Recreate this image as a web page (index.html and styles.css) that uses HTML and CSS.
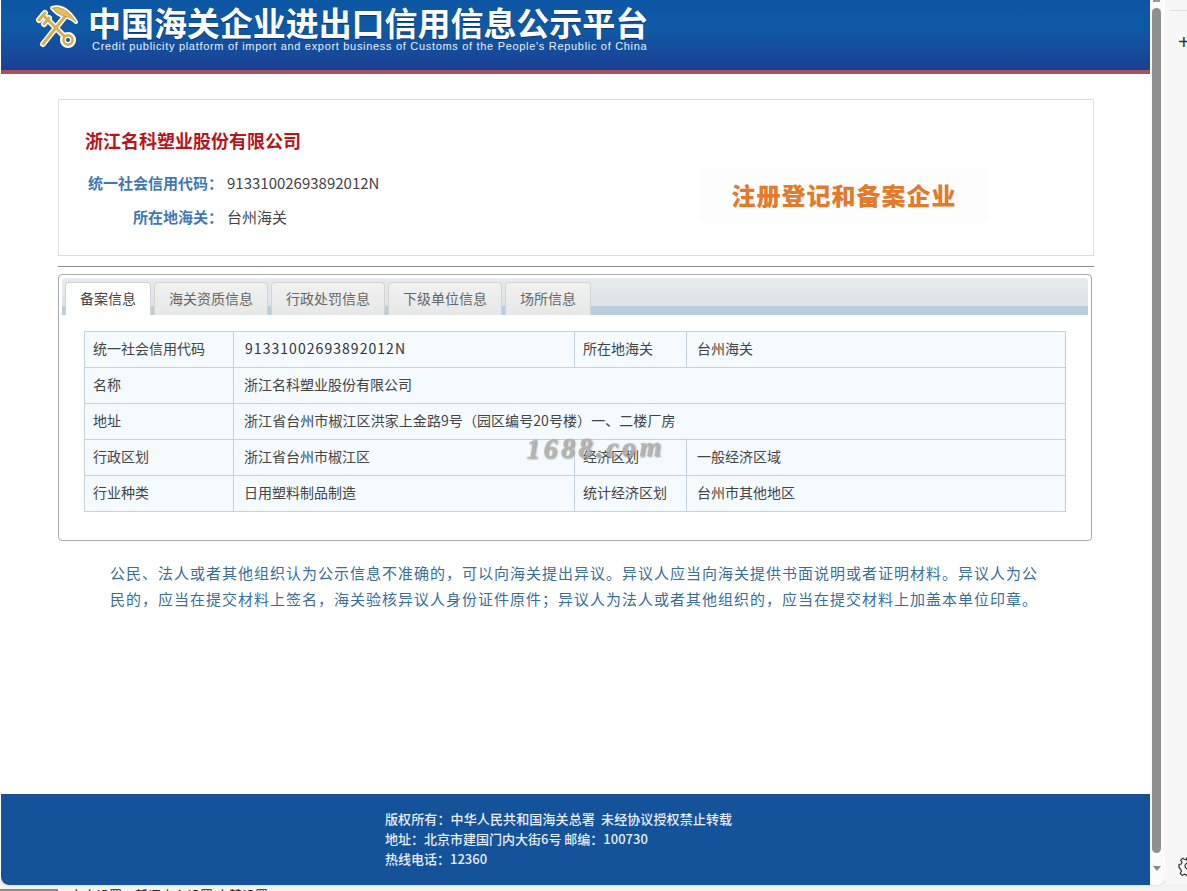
FILE: index.html
```html
<!DOCTYPE html>
<html lang="zh-CN">
<head>
<meta charset="utf-8">
<title>中国海关企业进出口信用信息公示平台</title>
<link rel="stylesheet" href="styles.css">
</head>
<body>
<div class="shell">
  <div class="window">
    <main class="page">
      <header class="banner">
        <div class="banner-main">
          <svg class="emblem" viewBox="0 0 44 48" width="44" height="48" aria-hidden="true">
            <g fill="none" stroke-linecap="round" stroke-linejoin="round">
              <g stroke="#fff" stroke-width="6">
                <path d="M7 10 L28 31"/>
                <path d="M3 15 L9 8 M8 19 L13 13"/>
                <circle cx="32" cy="35" r="5"/>
                <path d="M7 39 L31 9"/>
              </g>
              <path d="M16 3 Q29 -1 40 17 Q33 11 27 11 Q21 9 16 3 Z" fill="#fff" stroke="#fff" stroke-width="4"/>
              <g stroke="#d8ae4e" stroke-width="3">
                <path d="M7 10 L28 31"/>
                <path d="M3 15 L9 8 M8 19 L13 13"/>
                <circle cx="32" cy="35" r="4.6" stroke-width="2.6"/>
                <path d="M7 39 L31 9"/>
              </g>
              <path d="M16 3 Q29 -1 40 17 Q33 11 27 11 Q21 9 16 3 Z" fill="#e2bb5e" stroke="#c69a3c" stroke-width=".8"/>
            </g>
          </svg>
          <div class="banner-text">
            <div class="banner-title">中国海关企业进出口信用信息公示平台</div>
            <div class="banner-sub">Credit publicity platform of import and export business of Customs of the People's Republic of China</div>
          </div>
        </div>
      </header>

      <div class="content">
        <section class="company">
          <div class="company-info">
            <h1 class="company-name">浙江名科塑业股份有限公司</h1>
            <div class="info-row"><span class="info-label">统一社会信用代码：</span><span class="info-value">91331002693892012N</span></div>
            <div class="info-row"><span class="info-label">所在地海关：</span><span class="info-value">台州海关</span></div>
          </div>
          <div class="stamp"><span class="stamp-text">注册登记和备案企业</span></div>
        </section>

        <hr class="rule">

        <section class="tabbox">
          <nav class="tabbar">
            <a class="tab active">备案信息</a>
            <a class="tab">海关资质信息</a>
            <a class="tab">行政处罚信息</a>
            <a class="tab">下级单位信息</a>
            <a class="tab">场所信息</a>
          </nav>
          <table class="record">
            <colgroup><col class="c1"><col class="c2"><col class="c3"><col class="c4"></colgroup>
            <tr><td>统一社会信用代码</td><td class="num">91331002693892012N</td><td>所在地海关</td><td class="val">台州海关</td></tr>
            <tr><td>名称</td><td class="val" colspan="3">浙江名科塑业股份有限公司</td></tr>
            <tr><td>地址</td><td class="val addr" colspan="3">浙江省台州市椒江区洪家上金路9号（园区编号20号楼）一、二楼厂房</td></tr>
            <tr><td>行政区划</td><td class="val">浙江省台州市椒江区</td><td>经济区划</td><td class="val">一般经济区域</td></tr>
            <tr><td>行业种类</td><td class="val">日用塑料制品制造</td><td>统计经济区划</td><td class="val">台州市其他地区</td></tr>
          </table>
          <div class="watermark">1688.com</div>
        </section>

        <p class="notice">公民、法人或者其他组织认为公示信息不准确的，可以向海关提出异议。异议人应当向海关提供书面说明或者证明材料。异议人为公民的，应当在提交材料上签名，海关验核异议人身份证件原件；异议人为法人或者其他组织的，应当在提交材料上加盖本单位印章。</p>
      </div>

      <footer class="footer">
        <div class="footer-text">
          <div class="footer-first">版权所有：中华人民共和国海关总署&nbsp; 未经协议授权禁止转载</div>
          <div>地址：北京市建国门内大街6号 邮编：100730</div>
          <div>热线电话：12360</div>
        </div>
      </footer>
    </main>
    <div class="scrollbar">
      <span class="arrow up"></span>
      <span class="thumb"></span>
      <span class="arrow down"></span>
    </div>
  </div>
  <aside class="sidepanel">
    <span class="side-line"></span>
    <span class="plus">+</span>
    <svg class="gear" viewBox="0 0 20 20" width="20" height="20" aria-hidden="true"><path d="M8.5 2h3l.5 2.4 1.6.7 2.1-1.3 2.1 2.1-1.3 2.1.7 1.6 2.3.5v3l-2.3.5-.7 1.6 1.3 2.1-2.1 2.1-2.1-1.3-1.6.7-.5 2.3h-3l-.5-2.3-1.6-.7-2.1 1.3-2.1-2.1 1.3-2.1-.7-1.6L1 11.5v-3l2.3-.5.7-1.6-1.3-2.1 2.1-2.1 2.1 1.3L8.6 4z" fill="none" stroke="#333" stroke-width="1.2"/><circle cx="10" cy="10" r="3" fill="none" stroke="#333" stroke-width="1.2"/></svg>
  </aside>
</div>
<div class="peek">
  <span class="peek-thumb"></span>
  <span class="peek-text">点击设置　新闻中心设置 点赞设置</span>
</div>
</body>
</html>
```

FILE: styles.css
```css
* { box-sizing: border-box; }
html, body { margin: 0; padding: 0; height: 891px; overflow: hidden; background: #f3f3f3; }
body { font-family: "Noto Sans CJK SC", "Liberation Sans", sans-serif; color: #333; font-size: 13px; }

.shell { display: flex; height: 885px; }
.window { display: flex; width: 1165px; height: 885px; background: #fff; border-radius: 0 0 8px 8px; box-shadow: 0 0 2px #bbb; overflow: hidden; }
.page { width: 1150px; height: 885px; display: flex; flex-direction: column; padding-left: 1px; }

.banner { height: 74px; flex: none; border-bottom: 4px solid #a8525c; background: linear-gradient(180deg, #0d56a4 0%, #0f5aa6 40%, #1c3f92 100%); }
.banner-main { display: flex; padding-left: 35px; }
.emblem { flex: none; margin-top: 5px; overflow: visible; }
.banner-text { margin-left: 8px; }
.banner-title { color: #fff; font-size: 33px; font-weight: 700; line-height: 34px; margin-top: 5px; white-space: nowrap; width: 560px; letter-spacing: -.05px; text-shadow: 0 1px 1px rgba(10,30,90,.6); }
.banner-sub { color: #e8f0f8; font-family: "Liberation Sans", sans-serif; font-size: 11px; line-height: 12px; margin-top: 1px; margin-left: 4px; letter-spacing: .69px; white-space: nowrap; }

.content { flex: 1; padding: 25px 0 0 57px; }
.company { width: 1036px; height: 157px; border: 1px solid #ddd; display: flex; justify-content: space-between; }
.company-info { padding: 28px 0 0 26px; }
.company-name { margin: 0 0 13px; font-size: 18px; line-height: 24px; color: #b8141b; font-weight: 700; }
.info-row { display: flex; height: 34px; align-items: center; font-size: 15px; }
.info-label { width: 138px; text-align: right; color: #3f78b5; font-weight: 700; }
.info-value { color: #444; margin-left: 4px; }
.stamp { width: 288px; height: 54px; margin: 68px 105px 0 0; background: #fdfdfd; display: flex; align-items: center; justify-content: center; }
.stamp-text { font-size: 24px; line-height: 30px; font-weight: 900; color: #e27a2b; letter-spacing: 1px; white-space: nowrap; }

.rule { width: 1036px; height: 1px; margin: 10px 0 7px; border: 0; background: #8a8a8a; }

.tabbox { position: relative; width: 1034px; height: 267px; border: 1px solid #aaa; border-radius: 4px; padding: 3px; }
.tabbar { display: flex; gap: 3px; height: 37px; padding: 4px 0 0 3px; background: linear-gradient(180deg, #e6ebee 0, #dde3e6 28px, #b9cddb 28px, #b9cddb 100%); border-radius: 3px 3px 0 0; }
.tab { display: flex; align-items: center; justify-content: center; height: 33px; padding: 0 14px 2px; font-size: 14px; color: #666; background: linear-gradient(180deg, #f1f1f1, #e6e7e7); border: 1px solid #d2d4d4; border-bottom: 0; border-radius: 4px 4px 0 0; }
.tab.active { background: #fff; color: #444; }

.record { width: 981px; margin: 16px 0 0 22px; border-collapse: collapse; table-layout: fixed; background: #f5fafe; }
.record td { height: 36px; padding: 0 0 3px 8px; border: 1px solid #c3d3dc; font-size: 14px; color: #444; white-space: nowrap; }
.record td.val { padding-left: 10px; }
.record td.addr { letter-spacing: .07px; }
.record td.num { padding-left: 11px; letter-spacing: 1.05px; color: #333; }
.c1 { width: 149px; } .c2 { width: 341px; } .c3 { width: 112px; } .c4 { width: 379px; }

.watermark { position: absolute; left: 467px; top: 157px; font-family: "Liberation Serif", serif; font-size: 28px; font-style: italic; font-weight: 700; letter-spacing: 3.4px; color: #a8a8a8; text-shadow: 1px 1px 2px #888; transform: rotate(-1deg); pointer-events: none; opacity: .85; }

.notice { width: 930px; margin: 19px 0 0 52px; font-size: 15px; line-height: 26px; letter-spacing: 1px; color: #3a6e96; }

.footer { flex: none; height: 91px; background: #14539a; border-top: 1px solid #1f4a8e; border-radius: 0 0 0 8px; padding: 14px 0 0 384px; }
.footer-text { color: #e8eef6; font-size: 13px; font-weight: 500; line-height: 20px; }
.footer-first { letter-spacing: .12px; }

.scrollbar { position: relative; width: 15px; background: #fbfbfb; display: flex; flex-direction: column; align-items: center; }
.thumb { width: 9px; height: 845px; margin-top: 8px; margin-left: -3px; background: #8f8f8f; border-radius: 5px; }
.arrow { width: 0; height: 0; margin-left: -2px; }
.arrow.up { height: 2px; width: 7px; margin-top: 0; background: #999; margin-bottom: -2px; }
.arrow.down { margin-top: 13px; border: 4px solid transparent; border-top: 5px solid #888; }

.sidepanel { position: relative; flex: 1; display: flex; flex-direction: column; overflow: hidden; background: #f7f7f7; padding: 10px 0 0 5px; }
.side-line { display: block; height: 1px; width: 30px; background: #dedede; flex: none; }
.plus { font-size: 20px; line-height: 20px; color: #333; font-weight: 300; margin: 21px 0 0 8px; font-family: "Liberation Sans", sans-serif; flex: none; }
.gear { position: absolute; left: 13px; top: 856px; }

.peek { display: flex; height: 6px; overflow: hidden; background: #f3f3f3; }
.peek-thumb { width: 58px; height: 2px; margin-top: 4px; background: #7f8f88; flex: none; }
.peek-text { margin-left: 12px; margin-top: 3px; font-size: 13px; line-height: 14px; color: #222; white-space: nowrap; }
```
